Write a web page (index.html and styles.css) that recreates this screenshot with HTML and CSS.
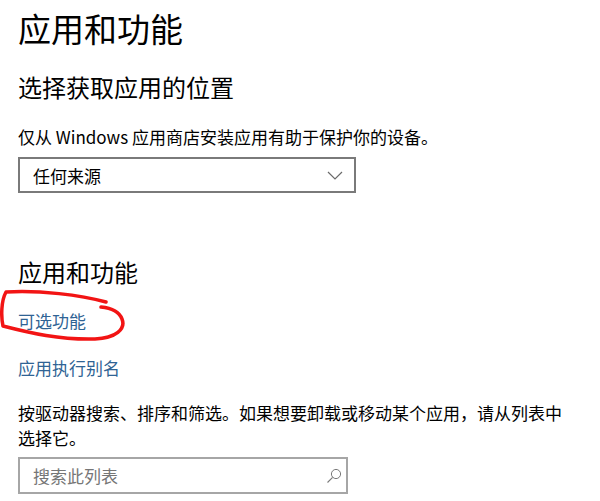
FILE: index.html
```html
<!DOCTYPE html>
<html lang="zh-CN">

<head>
  <meta charset="UTF-8">
  <title>应用和功能</title>
  <link rel="stylesheet" href="styles.css">
</head>

<body>
  <div id="page">
    <h1 class="pageTitle">应用和功能</h1>

    <h2 class="sectionTitle firstSection">选择获取应用的位置</h2>
    <p class="bodyText sourceHint">仅从 Windows 应用商店安装应用有助于保护你的设备。</p>

    <div class="dropdown">
      <span>任何来源</span>
      <svg class="chevron" width="16" height="9" viewBox="0 0 16 9">
        <path d="M1 1 L8 8 L15 1" fill="none" stroke="#6a6a6a" stroke-width="1.2" />
      </svg>
    </div>

    <h2 class="sectionTitle appsSection">应用和功能</h2>

    <div class="linkWrap">
      <a class="link" href="#">可选功能</a>
      <svg class="scribble" width="130" height="60" viewBox="0 285 130 60">
        <path d="M106 303 C 80 296, 40 291, 6 293 C 1 302, 1 318, 3 327 C 30 334, 60 341, 95 340 C 116 339, 126 330, 122 320 C 119 312, 111 309, 101 308"
          fill="none" stroke="#f21414" stroke-width="3.5" stroke-linecap="round" stroke-linejoin="round" />
      </svg>
    </div>

    <div class="linkRow">
      <a class="link" href="#">应用执行别名</a>
    </div>

    <p class="bodyText filterHint">按驱动器搜索、排序和筛选。如果想要卸载或移动某个应用，请从列表中<br>选择它。</p>

    <div class="searchBox">
      <span class="placeholder">搜索此列表</span>
      <svg class="searchIcon" width="16" height="16" viewBox="0 0 16 16">
        <circle cx="10" cy="6" r="4.6" fill="none" stroke="#7a7a7a" stroke-width="1" />
        <path d="M6.6 9.4 L1.5 14.5" fill="none" stroke="#7a7a7a" stroke-width="1.1" />
      </svg>
    </div>
  </div>
</body>

</html>
```

FILE: styles.css
```css
body {
  margin: 0px;
  background-color: #ffffff;
  color: #000000;
  font-family: "Noto Sans CJK SC", "Noto Sans", sans-serif;
}

#page {
  padding: 6px 0px 0px 18px;
}

.pageTitle {
  margin: 0px;
  font-size: 33px;
  line-height: 44px;
  font-weight: normal;
}

.sectionTitle {
  margin: 0px;
  font-size: 24px;
  line-height: 32px;
  font-weight: normal;
}

.firstSection {
  margin-top: 21px;
}

.appsSection {
  margin-top: 63px;
}

.bodyText {
  margin: 0px;
  font-size: 17px;
  line-height: 24px;
}

.sourceHint {
  margin-top: 22px;
}

.dropdown {
  display: flex;
  align-items: center;
  justify-content: space-between;
  box-sizing: border-box;
  width: 338px;
  height: 36px;
  margin-top: 8px;
  padding: 0px 11px 0px 13px;
  border: 2px solid #7a7a7a;
  font-size: 17px;
}

.chevron {
  display: block;
}

.linkWrap {
  position: relative;
  margin-top: 21px;
  line-height: 24px;
}

.linkRow {
  margin-top: 23px;
  line-height: 24px;
}

.link {
  color: #2f6394;
  font-size: 17px;
  text-decoration: none;
}

.scribble {
  position: absolute;
  left: -18px;
  top: -25px;
  pointer-events: none;
}

.filterHint {
  margin-top: 21px;
  line-height: 24.5px;
}

.searchBox {
  display: flex;
  align-items: center;
  justify-content: space-between;
  box-sizing: border-box;
  width: 330px;
  height: 37px;
  margin-top: 7px;
  padding: 0px 4px 0px 13px;
  border: 2px solid #a6a6a6;
  font-size: 17px;
}

.placeholder {
  color: #767676;
}

.searchIcon {
  display: block;
}
```
